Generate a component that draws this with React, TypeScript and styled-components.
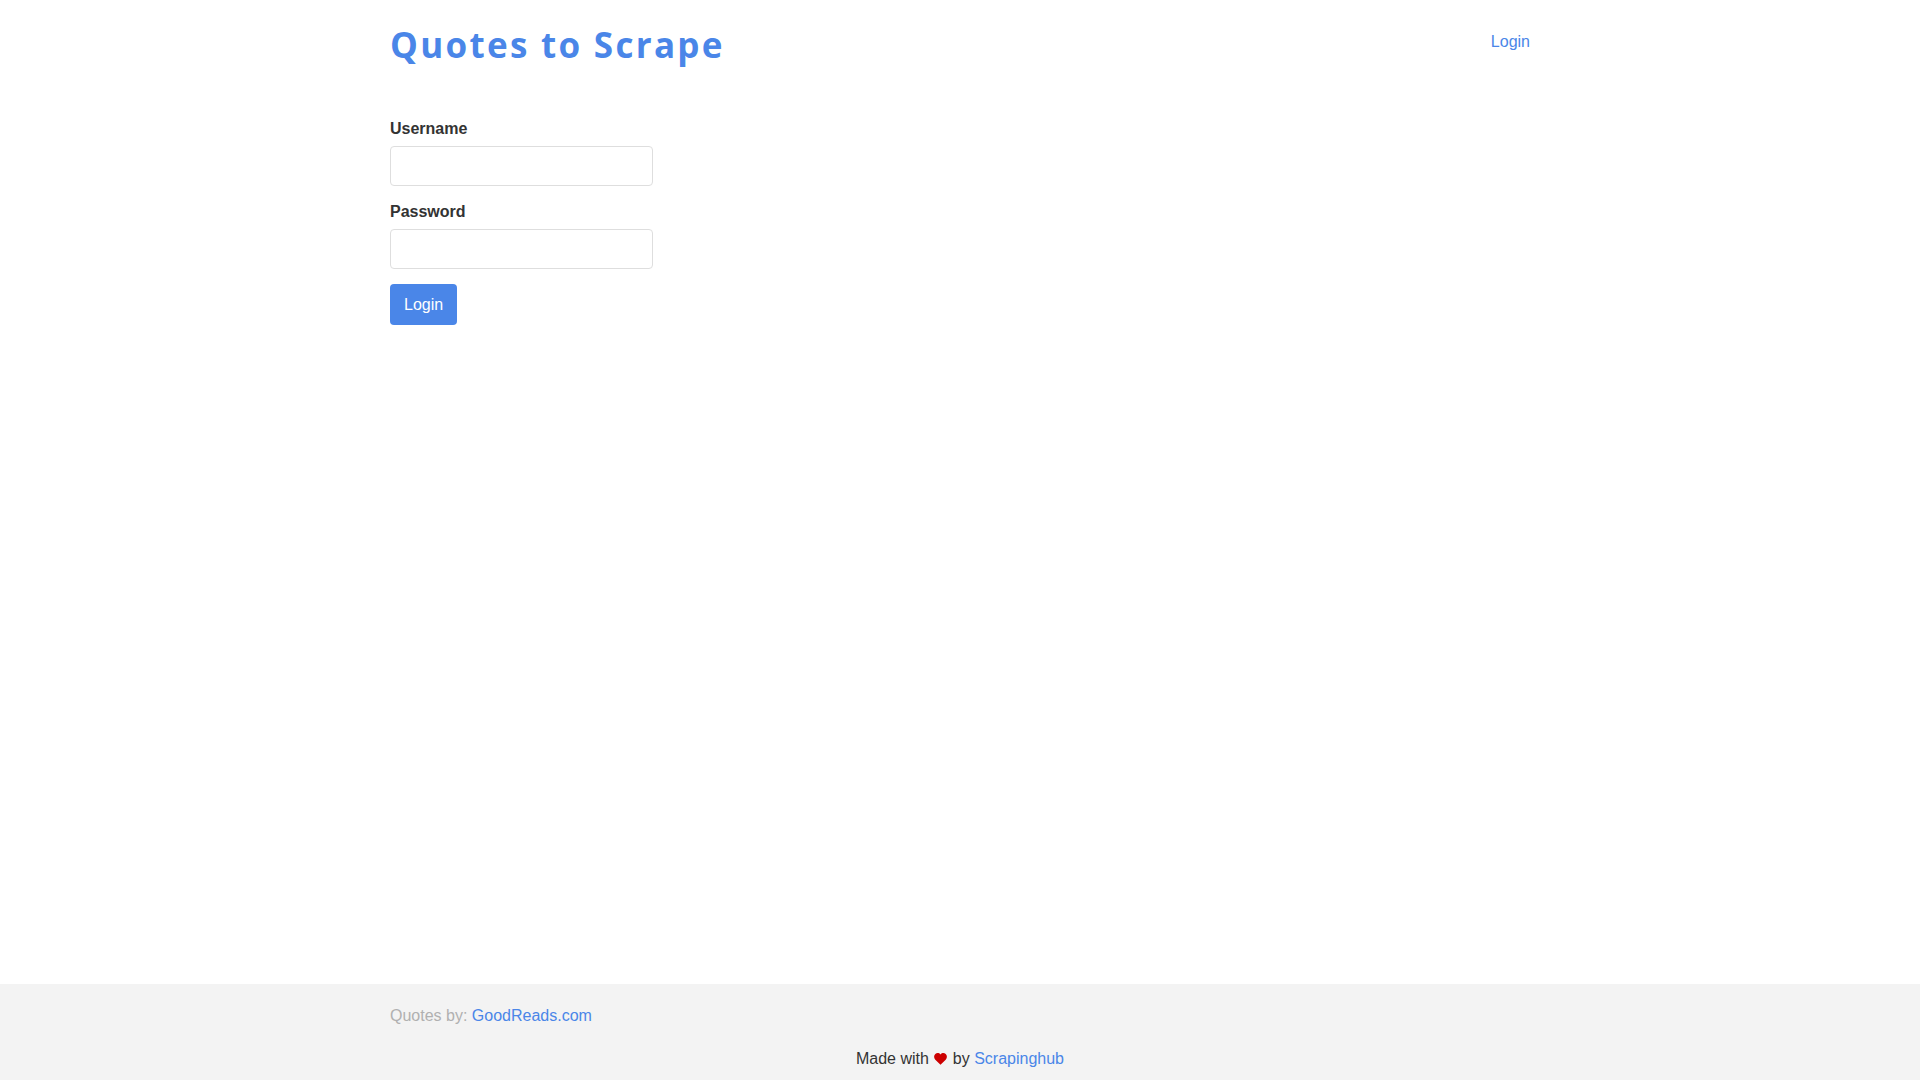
import React from "react";
import styled, { createGlobalStyle } from "styled-components";

const GlobalStyle = createGlobalStyle`
  html, body { margin: 0; padding: 0; background: #ffffff; }
  body {
    font-family: "Liberation Sans", Arial, Helvetica, sans-serif;
    font-size: 16px;
    color: #333333;
  }
  * { box-sizing: border-box; }
`;

const Page = styled.div`
  min-height: 100vh;
  display: flex;
  flex-direction: column;
`;

const Container = styled.div`
  width: 1140px;
  margin: 0 auto;
`;

const Header = styled.header`
  display: flex;
  justify-content: space-between;
  align-items: flex-start;
  padding-top: 22px;
`;

const Title = styled.h1`
  margin: 2px 0 0;
  font-family: "Open Sans", "Noto Sans", sans-serif;
  font-weight: 700;
  font-size: 35px;
  letter-spacing: 2.3px;
  line-height: 42px;
  a {
    color: #4a86e8;
    text-decoration: none;
  }
`;

const HeaderLink = styled.a`
  margin-top: 9px;
  line-height: 22px;
  color: #4a86e8;
  text-decoration: none;
`;

const Main = styled.main`
  flex: 1;
`;

const Form = styled.form`
  padding-top: 52px;
  width: 263px;
`;

const Group = styled.div`
  margin-bottom: 15px;
`;

const Label = styled.label`
  display: block;
  font-weight: 700;
  line-height: 22px;
  margin-bottom: 6px;
`;

const Input = styled.input`
  display: block;
  width: 100%;
  height: 40px;
  border: 1px solid #dedede;
  border-radius: 4px;
  padding: 6px 12px;
  font: inherit;
  background: #fff;
`;

const Button = styled.button`
  height: 41px;
  padding: 0 14px;
  border: none;
  border-radius: 4px;
  background: #4a86e8;
  color: #ffffff;
  font-family: "Liberation Sans", Arial, sans-serif;
  font-size: 16px;
  cursor: pointer;
`;

const Footer = styled.footer`
  background: #f3f3f3;
  height: 96px;
  padding-top: 21px;
`;

const FooterLine = styled.p`
  margin: 0;
  line-height: 22px;
  color: #333;
`;

const Muted = styled.span`
  color: #b0b0b0;
`;

const Link = styled.a`
  color: #4a86e8;
  text-decoration: none;
`;

const Credit = styled.p`
  margin: 21px 0 0;
  line-height: 22px;
  text-align: center;
  color: #333;
`;

const Heart = styled.svg`
  width: 13px;
  height: 12px;
  vertical-align: -1px;
  margin: 0 1px;
`;

export default function App() {
  return (
    <>
      <GlobalStyle />
      <Page>
        <Container>
          <Header>
            <Title>
              <a href="#">Quotes to Scrape</a>
            </Title>
            <HeaderLink href="#">Login</HeaderLink>
          </Header>
        </Container>
        <Main>
          <Container>
            <Form onSubmit={(e) => e.preventDefault()}>
              <Group>
                <Label htmlFor="username">Username</Label>
                <Input id="username" type="text" />
              </Group>
              <Group>
                <Label htmlFor="password">Password</Label>
                <Input id="password" type="password" />
              </Group>
              <Button type="submit">Login</Button>
            </Form>
          </Container>
        </Main>
        <Footer>
          <Container>
            <FooterLine>
              <Muted>Quotes by: </Muted>
              <Link href="#">GoodReads.com</Link>
            </FooterLine>
          </Container>
          <Credit>
            Made with{" "}
            <Heart viewBox="0 0 26 24">
              <path
                d="M13 23.5 L2.6 13.4 C-0.6 10.2 -0.6 5 2.6 2 C5.6 -0.8 10.2 -0.4 13 2.8 C15.8 -0.4 20.4 -0.8 23.4 2 C26.6 5 26.6 10.2 23.4 13.4 Z"
                fill="#cc0000"
              />
            </Heart>{" "}
            by <Link href="#">Scrapinghub</Link>
          </Credit>
        </Footer>
      </Page>
    </>
  );
}
